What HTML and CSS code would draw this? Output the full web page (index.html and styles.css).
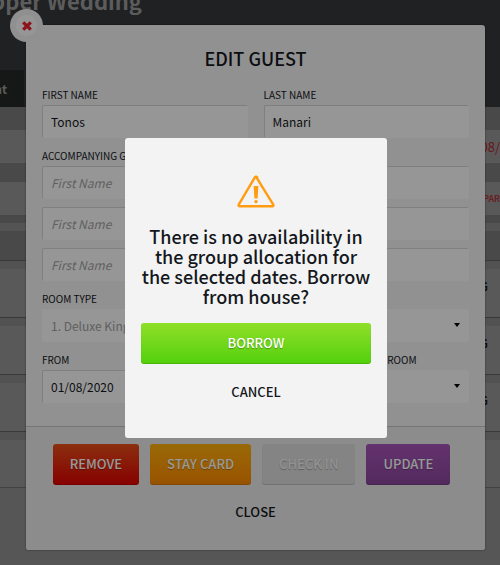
FILE: index.html
```html
<!DOCTYPE html>
<html lang="en">
<head>
  <meta charset="UTF-8">
  <meta name="viewport" content="width=device-width, initial-scale=1.0">
  <title>Edit Guest</title>
  <link rel="stylesheet" href="styles.css">
</head>
<body>
  <div class="page">
    <header class="page-header">
      <h1>pper Wedding</h1>
      <a class="tab" href="#">nt</a>
    </header>
    <div class="band band-dark"></div>
    <div class="band band-light date">08/</div>
    <div class="band band-gap"></div>
    <div class="band band-light depart">EPAR</div>
    <div class="band band-thin-dark"></div>
    <div class="band band-thin"></div>
    <div class="band band-head"></div>
    <div class="guest-row">G</div>
    <div class="guest-row">G</div>
    <div class="guest-row">G</div>
    <div class="guest-row"></div>
  </div>

  <div class="dialog-layer">
    <section class="dialog">
      <button class="dialog-close" aria-label="Close dialog">
        <svg width="12" height="12" viewBox="0 0 12 12">
          <path d="M2.2 2.4 9.8 9.6M9.8 2.4 2.2 9.6" stroke="#e8202b" stroke-width="3.2"/>
        </svg>
      </button>
      <form class="dialog-body">
        <h2>EDIT GUEST</h2>
        <div class="fields two">
          <div>
            <label for="first-name">FIRST NAME</label>
            <input type="text" id="first-name" value="Tonos">
          </div>
          <div>
            <label for="last-name">LAST NAME</label>
            <input type="text" id="last-name" value="Manari">
          </div>
        </div>
        <div class="guests">
          <label for="guest-1">ACCOMPANYING GUESTS</label>
          <div class="fields two">
            <input type="text" id="guest-1" placeholder="First Name">
            <input type="text" placeholder="Last Name" aria-label="Last name 1">
            <input type="text" placeholder="First Name" aria-label="First name 2">
            <input type="text" placeholder="Last Name" aria-label="Last name 2">
            <input type="text" placeholder="First Name" aria-label="First name 3">
            <input type="text" placeholder="Last Name" aria-label="Last name 3">
          </div>
        </div>
        <div>
          <label for="room-type">ROOM TYPE</label>
          <div class="select">
            <select id="room-type" disabled>
              <option>1. Deluxe King</option>
            </select>
          </div>
        </div>
        <div class="fields three">
          <div>
            <label for="from">FROM</label>
            <input type="text" id="from" value="01/08/2020">
          </div>
          <div>
            <label for="to">TO</label>
            <input type="text" id="to" value="">
          </div>
          <div>
            <label for="room">ASSIGNED ROOM</label>
            <div class="select">
              <select id="room">
                <option></option>
              </select>
            </div>
          </div>
        </div>
      </form>
      <footer class="dialog-footer">
        <div class="actions">
          <button class="btn red">REMOVE</button>
          <button class="btn orange">STAY CARD</button>
          <button class="btn grey" disabled>CHECK IN</button>
          <button class="btn purple">UPDATE</button>
        </div>
        <button class="btn-link">CLOSE</button>
      </footer>
    </section>
  </div>

  <div class="alert-layer">
    <div class="alert" role="alertdialog" aria-labelledby="alert-text">
      <svg class="alert-icon" width="38" height="33" viewBox="0 0 38 33">
        <path d="M19 1.7 36.3 29.6Q36.8 31.2 35.2 31.2H2.8Q1.2 31.2 1.7 29.6L17.7 2.6Q19 .9 20.3 2.6Z" fill="none" stroke="#ff9c0f" stroke-width="2.4" stroke-linejoin="round"/>
        <path d="M16.6 11H21.4L20.6 23.5H17.4Z" fill="#ff9c0f"/>
        <circle cx="19" cy="26.6" r="1.7" fill="#ff9c0f"/>
      </svg>
      <p id="alert-text">There is no availability in the group allocation for the selected dates. Borrow from house?</p>
      <button class="btn green">BORROW</button>
      <button class="btn-link">CANCEL</button>
    </div>
  </div>
</body>
</html>
```

FILE: styles.css
```css
* {
  box-sizing: border-box;
}
body {
  margin: 0;
  min-height: 100vh;
  position: relative;
  background-color: #909090;
  font-family: "Noto Sans CJK SC", "Noto Sans", sans-serif;
  font-size: 13px;
  color: #14171c;
  overflow: hidden;
}
h1, h2, p {
  margin: 0;
}
button, input, select {
  font-family: inherit;
  font-size: 12px;
}

/* page behind the dialog */
.page-header {
  height: 107px;
  background-color: #34383a;
  display: flex;
  flex-direction: column;
  justify-content: space-between;
  align-items: flex-start;
}
h1 {
  width: 142px;
  height: 15px;
  display: flex;
  justify-content: flex-end;
  align-items: flex-end;
  white-space: nowrap;
  font-size: 22px;
  line-height: 30px;
  color: #9a9a9a;
}
.tab {
  width: 24px;
  height: 37px;
  display: flex;
  justify-content: flex-end;
  padding-right: 17px;
  line-height: 37px;
  font-size: 12px;
  font-weight: bold;
  color: #9a9a9a;
  background-color: #262928;
  text-decoration: none;
}
.band {
  display: flex;
  justify-content: flex-end;
  align-items: center;
  background-color: #7b7b7b;
}
.band-dark {
  height: 23px;
}
.band-light {
  height: 33px;
  background-color: #949494;
}
.date {
  color: #b0282c;
}
.depart {
  font-size: 9px;
  font-weight: 500;
  color: #b0282c;
}
.band-gap {
  height: 19px;
}
.band-thin-dark {
  height: 8px;
}
.band-thin {
  height: 8px;
  background-color: #8c8c8c;
}
.band-head {
  height: 29px;
}
.guest-row {
  height: 57px;
  border-top: 1px solid #606060;
  background: linear-gradient(#898989 8px, #949494 8px);
  text-align: right;
  padding-right: 12px;
  line-height: 50px;
  font-size: 11px;
  font-weight: bold;
}
.guest-row:last-child {
  border-bottom: 1px solid #707070;
}

/* edit guest dialog */
.dialog-layer {
  position: absolute;
  top: 0;
  left: 0;
  right: 0;
  padding: 25px 15px 15px 26px;
}
.dialog {
  position: relative;
  border-radius: 3px;
  background-color: #f2f2f2;
  box-shadow: 0 0 2px rgba(0, 0, 0, 0.5);
}
.dialog-close {
  position: absolute;
  top: -16px;
  left: -16px;
  width: 33px;
  height: 33px;
  padding: 0;
  display: flex;
  justify-content: center;
  align-items: center;
  border: none;
  border-radius: 50%;
  background: radial-gradient(#fafafa 10px, #f0f0f0 11px);
}
.dialog-body {
  display: flex;
  flex-direction: column;
  gap: 8px;
  padding: 21px 16px 23px;
}
h2 {
  margin-bottom: 7px;
  text-align: center;
  font-size: 18px;
  font-weight: 500;
  line-height: 24px;
}
label {
  display: block;
  font-size: 10px;
  line-height: 20px;
}
.fields {
  display: grid;
  gap: 8px 16px;
}
.two {
  grid-template-columns: repeat(2, 1fr);
}
.three {
  grid-template-columns: repeat(3, 1fr);
}
input {
  display: block;
  width: 100%;
  height: 33px;
  padding: 0 8px 1px;
  border: 1px solid #fafafa;
  border-top-color: #d4d4d4;
  border-left-color: #d4d4d4;
  border-radius: 2px;
  background-color: #fbfbfb;
  color: #14171c;
}
input::placeholder {
  color: #a0a0a0;
  font-style: italic;
}
.select {
  position: relative;
}
.select::after {
  content: "";
  position: absolute;
  top: 14px;
  right: 9px;
  border: 3px solid transparent;
  border-top: 4px solid #000;
  border-bottom: none;
}
select {
  display: block;
  width: 100%;
  height: 33px;
  padding: 0 9px 1px;
  appearance: none;
  border: none;
  border-radius: 2px;
  background-color: #fbfbfb;
  color: #14171c;
}
select:disabled {
  color: #a0a0a0;
  opacity: 1;
}
.dialog-footer {
  display: flex;
  flex-direction: column;
  align-items: center;
  gap: 15px;
  padding: 17px 16px 26px;
  border-top: 1px solid #c4c4c4;
  border-radius: 0 0 3px 3px;
  background-color: #e9e9e9;
}
.actions {
  display: flex;
  gap: 11px;
  padding-right: 8px;
}

/* buttons */
.btn {
  height: 41px;
  padding: 0 17px 3px;
  border: none;
  border-radius: 3px;
  font-size: 13px;
  font-weight: 500;
  white-space: nowrap;
  color: #fff;
  text-shadow: 0 1px 1px rgba(0, 0, 0, 0.3);
  box-shadow: inset 0 -1px 1px rgba(0, 0, 0, 0.15);
}
.red {
  background: linear-gradient(#e8501a, #e00000);
}
.orange {
  background: linear-gradient(#ffb00c, #ff8a00);
}
.grey {
  background: #dcdcdc;
  color: #f4f4f4;
}
.purple {
  background: linear-gradient(#a654b8, #8b479c);
}
.green {
  background: linear-gradient(#90de28, #52d10c);
}
.btn-link {
  padding: 0;
  border: none;
  background: none;
  font-size: 13px;
  font-weight: 500;
  line-height: 24px;
  color: #14171c;
}

/* alert on top of everything */
.alert-layer {
  position: absolute;
  top: 0;
  left: 0;
  right: 0;
  min-height: 100vh;
  padding: 138px 113px 0 125px;
  background-color: rgba(0, 0, 0, 0.4);
}
.alert {
  display: flex;
  flex-direction: column;
  align-items: center;
  padding: 37px 16px 34px;
  border-radius: 3px;
  background-color: #f3f3f3;
}
.alert p {
  margin: 18px 0 17px;
  text-align: center;
  font-size: 18px;
  font-weight: 500;
  line-height: 20px;
}
.alert .btn {
  width: 100%;
  margin-bottom: 16px;
}
```
